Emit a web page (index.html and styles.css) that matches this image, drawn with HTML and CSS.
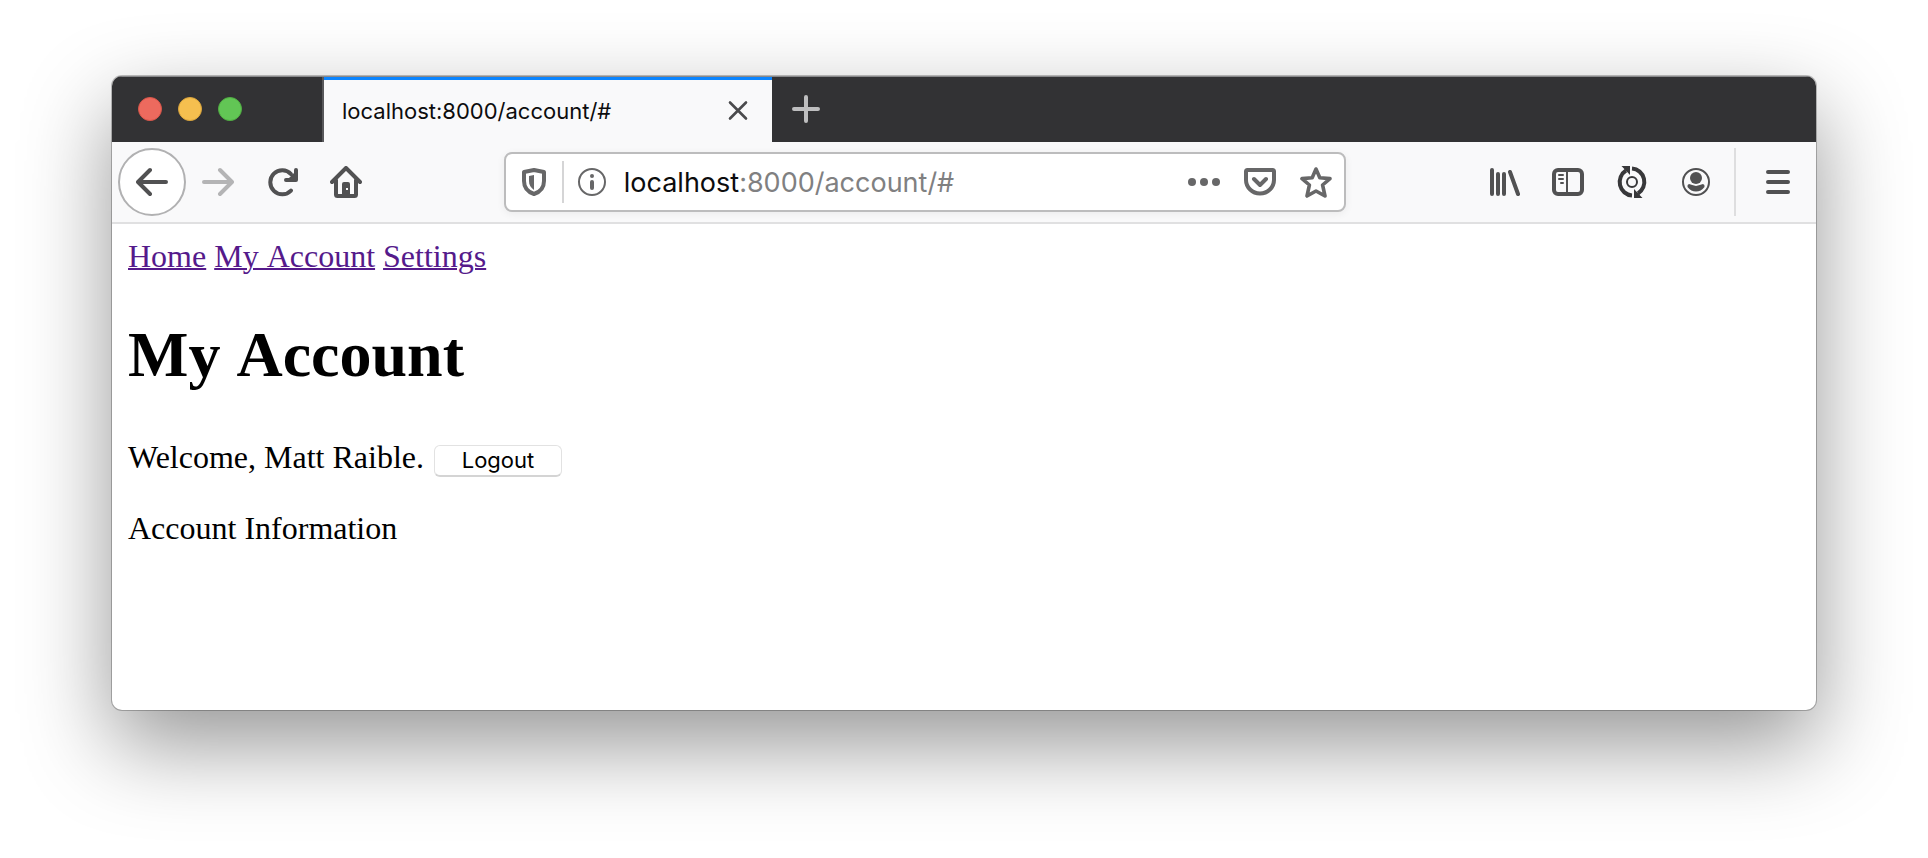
FILE: index.html
```html
<!DOCTYPE html>
<html lang="en">
<head>
<meta charset="utf-8">
<meta name="viewport" content="width=device-width, initial-scale=1">
<title>localhost:8000/account/#</title>
<link rel="stylesheet" href="styles.css">
</head>
<body>
<div class="window">
  <header class="tab-strip">
    <div class="traffic-lights">
      <button class="light light-close" type="button" aria-label="Close window"></button>
      <button class="light light-minimize" type="button" aria-label="Minimize window"></button>
      <button class="light light-zoom" type="button" aria-label="Zoom window"></button>
    </div>
    <div class="tab">
      <span class="tab-title">localhost:8000/account/#</span>
      <button class="tab-close" type="button" aria-label="Close tab">
        <svg class="icon" viewBox="0 0 32 32"><path d="M8 7.500L24 23.500M24 7.500L8 23.500" stroke-width="2.600"/></svg>
      </button>
    </div>
    <button class="new-tab" type="button" aria-label="New tab">
      <svg class="icon" viewBox="0 0 32 32"><path d="M16 4V28M4 16H28" stroke-width="4"/></svg>
    </button>
  </header>

  <div class="toolbar">
    <button class="tool back" type="button" aria-label="Back">
      <svg class="icon" viewBox="0 0 32 32"><path d="M30 16H3M14 4L2 16L14 28" stroke-width="4"/></svg>
    </button>
    <button class="tool forward" type="button" aria-label="Forward" disabled>
      <svg class="icon" viewBox="0 0 32 32"><path d="M2 16H29M18 4L30 16L18 28" stroke-width="4"/></svg>
    </button>
    <button class="tool" type="button" aria-label="Reload">
      <svg class="icon" viewBox="0 0 32 32"><path d="M25 24.500A12 12 0 1 1 25 8" stroke-width="4"/><path d="M30 4V14H20" stroke-width="4"/><path d="M30 5V14H21Z" fill="currentColor" stroke="none"/></svg>
    </button>
    <button class="tool" type="button" aria-label="Home">
      <svg class="icon" viewBox="0 0 32 32"><path d="M2 16L16 2L30 16M6 14V28.500Q6 30 7.500 30H24.500Q26 30 26 28.500V14" stroke-width="4"/><path fill="currentColor" stroke="none" fill-rule="evenodd" d="M12 30V18Q12 16 14 16H18Q20 16 20 18V30ZM16 22V24H18V22Z"/></svg>
    </button>
    <div class="spacer"></div>
    <div class="url-bar">
      <button class="url-button" type="button" aria-label="Tracking protection">
        <svg class="icon" viewBox="0 0 32 32"><path d="M16 4Q21 5 26 6V15C26 22 22 26 16 28C10 26 6 22 6 15V6Q11 5 16 4Z" stroke-width="4"/><path d="M16 9V24C12.500 21.500 11 19 11 15V10Z" fill="currentColor" stroke="none"/></svg>
      </button>
      <span class="url-divider"></span>
      <button class="url-button" type="button" aria-label="Site information">
        <svg class="icon" viewBox="0 0 32 32"><circle cx="16" cy="16" r="13" stroke-width="2"/><circle cx="16" cy="10" r="2" fill="currentColor" stroke="none"/><path d="M16 16V22" stroke-width="4"/></svg>
      </button>
      <div class="url-text" role="textbox" contenteditable="true" spellcheck="false" aria-label="Address"><span class="url-host">localhost</span>:8000/account/#</div>
      <button class="url-button" type="button" aria-label="Page actions">
        <svg class="icon" viewBox="0 0 32 32"><g fill="currentColor" stroke="none"><circle cx="4" cy="16" r="4"/><circle cx="16" cy="16" r="4"/><circle cx="28" cy="16" r="4"/></g></svg>
      </button>
      <button class="url-button" type="button" aria-label="Save to Pocket">
        <svg class="icon" viewBox="0 0 32 32"><path d="M3.500 4H28.500Q30 4 30 5.500V14A14 13.500 0 0 1 2 14V5.500Q2 4 3.500 4ZM10 13L16 19L22 13" stroke-width="4"/></svg>
      </button>
      <button class="url-button" type="button" aria-label="Bookmark this page">
        <svg class="icon" viewBox="0 0 32 32"><path d="M16 3L19.800 11.700L30 12.600L22.600 19L25 30L16 25L7 30L9.400 19L2 12.600L12.200 11.700Z" stroke-width="3.600"/></svg>
      </button>
    </div>
    <div class="spacer"></div>
    <button class="tool" type="button" aria-label="Library">
      <svg class="icon" viewBox="0 0 32 32"><path d="M4 4V28M10 8V28M16 8V28M22 6L30 28" stroke-width="4"/></svg>
    </button>
    <button class="tool" type="button" aria-label="Sidebars">
      <svg class="icon" viewBox="0 0 32 32"><rect x="2" y="4" width="28" height="24" rx="4" stroke-width="4"/><path d="M15 5V27M7 9H11M7 13H11M9 17H11" stroke-width="2"/></svg>
    </button>
    <button class="tool sync" type="button" aria-label="Sync">
      <svg class="icon" viewBox="0 0 32 32"><circle cx="16" cy="16" r="5" stroke-width="2"/><path stroke-linecap="butt" stroke-width="4" d="M16 2.500A13.200 13.500 0 0 1 22 27.500M16 29.500A13.200 13.500 0 0 1 10 4.500"/><path fill="currentColor" stroke="none" d="M5.500 0H14V9ZM18 23V32H26.500Z"/></svg>
    </button>
    <button class="tool" type="button" aria-label="Account">
      <svg class="icon" viewBox="0 0 32 32"><circle cx="16" cy="16" r="13" stroke-width="2"/><circle cx="16" cy="12" r="6" fill="currentColor" stroke="none"/><path fill="currentColor" stroke="none" d="M9 18Q12 19 16 20Q20 19 23 18Q25 18.500 24.500 21Q21 25.500 16 25.500Q11 25.500 7.500 21Q7 18.500 9 18Z"/></svg>
    </button>
    <span class="toolbar-divider"></span>
    <button class="tool" type="button" aria-label="Open menu">
      <svg class="icon" viewBox="0 0 32 32"><path d="M6 6H26M6 16H26M6 26H26" stroke-width="4"/></svg>
    </button>
  </div>

  <main class="page">
    <nav class="page-nav"><a href="#">Home</a> <a href="#">My Account</a> <a href="#">Settings</a></nav>
    <h1 class="page-title">My Account</h1>
    <div class="welcome">Welcome, Matt Raible. <button class="logout" type="button">Logout</button></div>
    <p class="info">Account Information</p>
  </main>
</div>
</body>
</html>
```

FILE: styles.css
```css
* {
  box-sizing: border-box;
}

body {
  margin: 0;
  min-height: 100vh;
  padding: 76px 112px 148px;
  display: flex;
  background: #fff;
  overflow-x: hidden;
}

button {
  margin: 0;
  padding: 0;
  border: 0;
  background: none;
  color: inherit;
  font: inherit;
}

.window {
  flex: 1;
  min-width: 0;
  display: flex;
  flex-direction: column;
  border-radius: 10px;
  overflow: hidden;
  background: #fff;
  font-family: Inter, "Liberation Sans", sans-serif;
  box-shadow: 0 0 0 1px rgba(0, 0, 0, 0.24), 0 34px 88px rgba(0, 0, 0, 0.42);
}

.icon {
  display: block;
  width: 32px;
  height: 32px;
  fill: none;
  stroke: currentColor;
  stroke-linecap: round;
  stroke-linejoin: round;
}

/* Tab strip */
.tab-strip {
  display: flex;
  height: 66px;
  background: #323234;
  border-top: 1px solid #88888a;
}

.traffic-lights {
  display: flex;
  align-items: center;
  gap: 16px;
  width: 212px;
  padding: 0 0 2px 26px;
  border-right: 2px solid #58585a;
}

.light {
  width: 24px;
  height: 24px;
  border-radius: 50%;
}

.light-close {
  background: #ed6a5e;
  border: 1px solid #d95549;
}

.light-minimize {
  background: #f5bf4f;
  border: 1px solid #dba53c;
}

.light-zoom {
  background: #62c655;
  border: 1px solid #50ae42;
}

.tab {
  display: flex;
  align-items: center;
  justify-content: space-between;
  width: 448px;
  padding: 0 18px;
  background: #f9f9fa;
  border-top: 3px solid #0a84ff;
}

.tab-title {
  font-size: 22px;
  color: #0c0c0d;
}

.tab-close {
  color: #4a4a4c;
}

.new-tab {
  display: flex;
  align-items: center;
  justify-content: center;
  width: 68px;
  padding-bottom: 2px;
  color: #bebebf;
}

/* Toolbar */
.toolbar {
  display: flex;
  align-items: center;
  height: 82px;
  padding: 0 6px;
  background: #f9f9fa;
  border-bottom: 2px solid #e0e0e1;
  color: #515152;
}

.tool {
  display: flex;
  flex: none;
  align-items: center;
  justify-content: center;
  width: 64px;
  height: 64px;
}

.back {
  width: 68px;
  height: 68px;
  border: 2px solid #b1b1b2;
  border-radius: 50%;
  background: #fff;
}

.forward {
  color: #b4b4b5;
}

.sync {
  color: #38383a;
}

.spacer {
  flex: 3;
}

.toolbar-divider {
  width: 2px;
  height: 68px;
  margin: 0 10px 0 6px;
  background: #dededf;
}

.url-bar {
  flex: 20;
  display: flex;
  align-items: center;
  height: 60px;
  border: 2px solid #bcbcbd;
  border-radius: 8px;
  background: #fff;
  color: #676768;
  box-shadow: 0 2px 8px rgba(0, 0, 0, 0.06);
}

.url-button {
  display: flex;
  flex: none;
  align-items: center;
  justify-content: center;
  width: 56px;
  height: 56px;
}

.url-divider {
  width: 2px;
  height: 42px;
  background: #d5d5d6;
}

.url-text {
  flex: 1;
  min-width: 0;
  padding: 2px 0 0 4px;
  font-size: 27px;
  line-height: 36px;
  white-space: nowrap;
  color: #808081;
  outline: 0;
}

.url-host {
  color: #0c0c0d;
}

/* Page */
.page {
  flex: 1;
  padding: 14px 16px;
  font-family: "Liberation Serif", "Times New Roman", serif;
  font-size: 32px;
  line-height: 36px;
  color: #000;
}

.page-nav,
.page-title {
  font-kerning: none;
}

.page-nav a {
  color: #551a8b;
  text-decoration-thickness: 2px;
}

.page-title {
  margin: 44px 0;
  font-size: 64px;
  line-height: 74px;
  font-weight: bold;
}

.welcome {
  line-height: 42px;
}

.logout {
  width: 128px;
  height: 32px;
  margin-left: 2px;
  border: 1px solid #e2e2e2;
  border-bottom: 2px solid #d4d4d4;
  border-radius: 6px;
  background: #fff;
  font-family: Inter, "Liberation Sans", sans-serif;
  font-size: 22px;
  line-height: 28px;
}

.info {
  margin: 32px 0;
}
```
